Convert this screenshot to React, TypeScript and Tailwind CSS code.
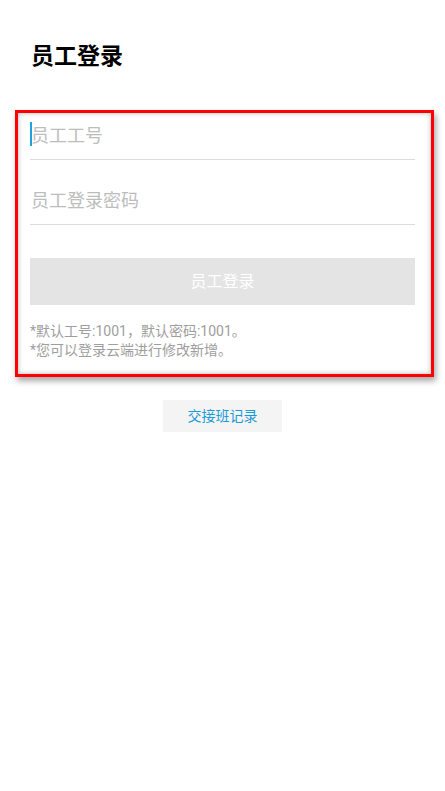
export default function App() {
  const font = { fontFamily: 'Roboto, "Noto Sans CJK SC", "Noto Sans", sans-serif' };

  return (
    <div className="min-h-[791px] w-[445px] bg-white" style={font}>
      <div className="px-[31px] pt-[42px]">
        <h1 className="text-[23px] font-bold leading-[30px] text-black">员工登录</h1>
      </div>

      <div className="ml-[15px] mr-[11px] mt-[38px] border-[3px] border-[#ff0000] bg-white pb-[14px] pl-3 pr-4 shadow-[2px_4px_6px_rgba(0,0,0,0.35),inset_0_0_5px_rgba(0,0,0,0.3)]">
        <div className="relative flex h-[47px] items-center border-b border-[#dcdcdc]">
          <span className="absolute left-0 top-[9px] h-[24px] w-[2px] bg-[#1fa3e0]"></span>
          <span className="pl-px text-[18px] leading-[24px] text-[#bdbdbd]">员工工号</span>
        </div>
        <div className="mt-[18px] flex h-[47px] items-center border-b border-[#dcdcdc]">
          <span className="pl-px text-[18px] leading-[24px] text-[#bdbdbd]">员工登录密码</span>
        </div>

        <button className="mt-[33px] flex h-[47px] w-full items-center justify-center bg-[#e4e4e4] text-[16px] text-white">
          员工登录
        </button>

        <div className="mt-[17px] text-[14px] leading-[19px] text-[#9e9e9e]">
          <p>*默认工号:1001，默认密码:1001。</p>
          <p>*您可以登录云端进行修改新增。</p>
        </div>
      </div>

      <div className="mt-[23px] flex justify-center">
        <button className="h-[32px] w-[119px] bg-[#f4f4f4] text-[14px] text-[#1b9ad6]">交接班记录</button>
      </div>
    </div>
  );
}
